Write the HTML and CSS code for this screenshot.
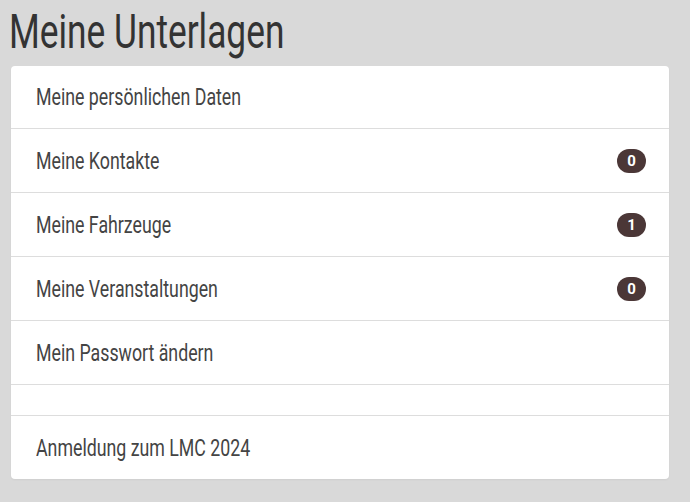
FILE: index.html
```html
<!DOCTYPE html>
<html lang="de">
<head>
    <meta charset="UTF-8">
    <meta name="viewport" content="width=device-width, initial-scale=1.0">
    <title>Meine Unterlagen</title>
    <link rel="stylesheet" href="styles.css">
</head>
<body>
    <h1 class="page-title"><span class="narrow">Meine Unterlagen</span></h1>

    <ul class="doc-list">
        <li class="doc-item"><a href="#" class="narrow">Meine persönlichen Daten</a></li>
        <li class="doc-item"><a href="#" class="narrow">Meine Kontakte</a><span class="badge">0</span></li>
        <li class="doc-item"><a href="#" class="narrow">Meine Fahrzeuge</a><span class="badge">1</span></li>
        <li class="doc-item"><a href="#" class="narrow">Meine Veranstaltungen</a><span class="badge">0</span></li>
        <li class="doc-item"><a href="#" class="narrow">Mein Passwort ändern</a></li>
        <li class="doc-item empty"></li>
        <li class="doc-item"><a href="#" class="narrow">Anmeldung zum LMC 2024</a></li>
    </ul>
</body>
</html>
```

FILE: styles.css
```css
body {
    font-family: Roboto, "Liberation Sans", sans-serif;
    background-color: #d9d9d9;
    margin: 0;
    padding: 0 21px 24px 11px;
    color: #444;
}
/* condensed look, no narrow font installed */
.narrow {
    display: inline-block;
    transform-origin: left center;
}
.page-title {
    font-size: 48px;
    font-weight: normal;
    color: #333;
    margin: 0 0 0 -2px;
    padding: 4px 0 0 0;
    height: 62px;
    line-height: 56px;
}
.page-title .narrow {
    transform: scaleX(0.735);
}
.doc-list {
    list-style: none;
    margin: 0;
    padding: 0;
    background-color: white;
    border-radius: 4px;
    box-shadow: 0 1px 2px rgba(0, 0, 0, 0.05);
}
.doc-item {
    display: flex;
    align-items: center;
    justify-content: space-between;
    height: 63px;
    padding: 0 23px 0 25px;
    border-top: 1px solid #ddd;
}
.doc-item:first-child {
    border-top: none;
    height: 62px;
}
.doc-item.empty {
    height: 30px;
}
.doc-item a {
    color: #444;
    text-decoration: none;
    font-size: 24px;
    transform: scaleX(0.74);
}
.badge {
    background-color: #4b3737;
    color: white;
    font-size: 15px;
    font-weight: bold;
    min-width: 13px;
    height: 24px;
    line-height: 24px;
    padding: 0 8px;
    border-radius: 12px;
    text-align: center;
}
```
